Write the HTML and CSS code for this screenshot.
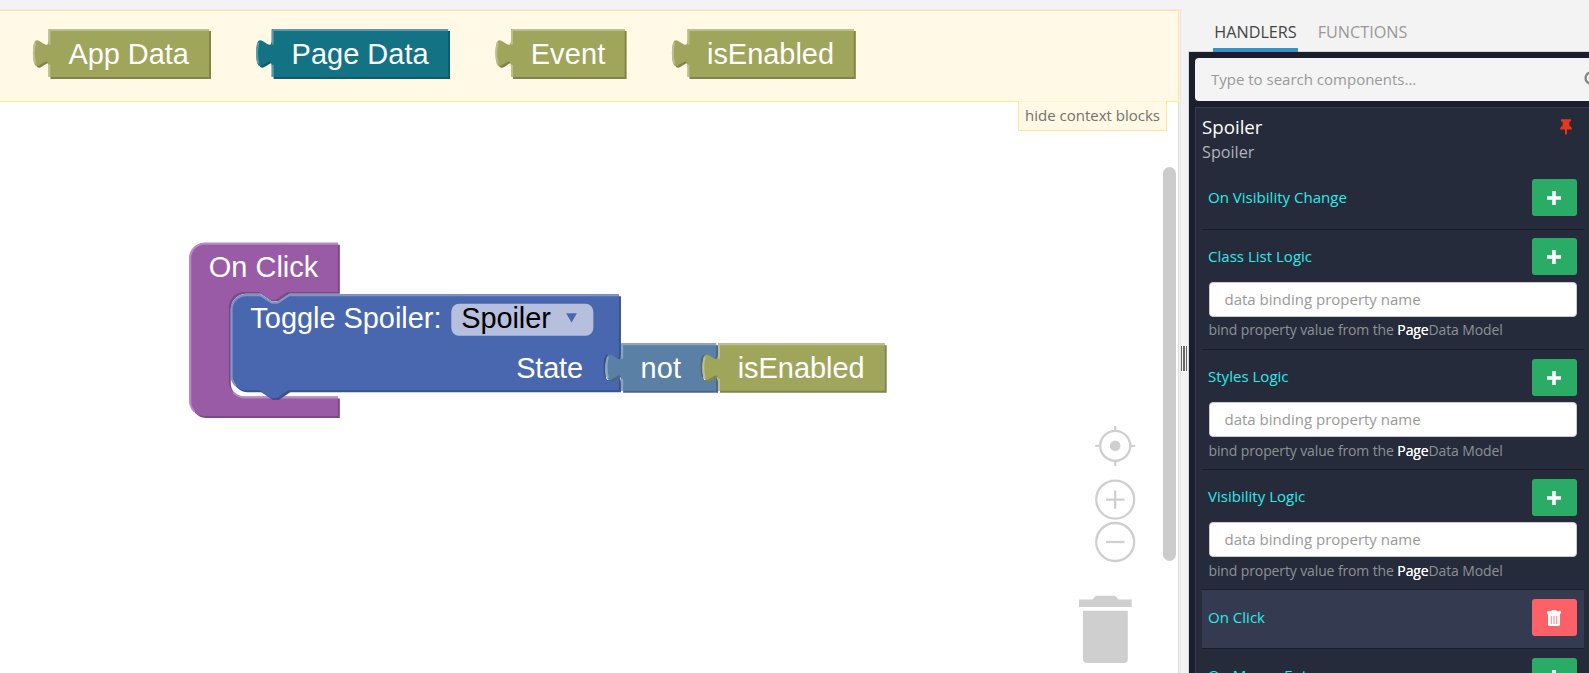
FILE: index.html
```html
<!DOCTYPE html>
<html lang="en">
<head>
<meta charset="utf-8">
<title>Logic editor</title>
<link rel="stylesheet" href="styles.css">
</head>
<body>
<div class="app">
  <main class="editor">
    <section class="context">
      <svg class="context-blocks" width="1178" height="90" viewBox="0 11 1178 90">
        <g class="block olive" transform="translate(48.5 29) scale(1.93)">
          <path class="dark" transform="translate(1 1)" d="M0,0H83.2V24.9H0V20c0,-10 -8,8 -8,-7.5s8,2.5 8,-7.5z"/>
          <path class="main" d="M0,0H83.2V24.9H0V20c0,-10 -8,8 -8,-7.5s8,2.5 8,-7.5z"/>
          <path class="light" d="M.5,.5H83.2M.5,24.9V18.5m-7.36,-.5q-1.52,-5.5 0,-11m7.36,1V.5"/>
          <text x="10.3" y="18.2" textLength="62.4">App Data</text>
        </g>
        <g class="block teal" transform="translate(271.7 29) scale(1.93)">
          <path class="dark" transform="translate(1 1)" d="M0,0H91.4V24.9H0V20c0,-10 -8,8 -8,-7.5s8,2.5 8,-7.5z"/>
          <path class="main" d="M0,0H91.4V24.9H0V20c0,-10 -8,8 -8,-7.5s8,2.5 8,-7.5z"/>
          <path class="light" d="M.5,.5H91.4M.5,24.9V18.5m-7.36,-.5q-1.52,-5.5 0,-11m7.36,1V.5"/>
          <text x="10.3" y="18.2" textLength="71">Page Data</text>
        </g>
        <g class="block olive" transform="translate(511 29) scale(1.93)">
          <path class="dark" transform="translate(1 1)" d="M0,0H58.9V24.9H0V20c0,-10 -8,8 -8,-7.5s8,2.5 8,-7.5z"/>
          <path class="main" d="M0,0H58.9V24.9H0V20c0,-10 -8,8 -8,-7.5s8,2.5 8,-7.5z"/>
          <path class="light" d="M.5,.5H58.9M.5,24.9V18.5m-7.36,-.5q-1.52,-5.5 0,-11m7.36,1V.5"/>
          <text x="10.2" y="18.2" textLength="38.6">Event</text>
        </g>
        <g class="block olive" transform="translate(687.5 29) scale(1.93)">
          <path class="dark" transform="translate(1 1)" d="M0,0H86.2V24.9H0V20c0,-10 -8,8 -8,-7.5s8,2.5 8,-7.5z"/>
          <path class="main" d="M0,0H86.2V24.9H0V20c0,-10 -8,8 -8,-7.5s8,2.5 8,-7.5z"/>
          <path class="light" d="M.5,.5H86.2M.5,24.9V18.5m-7.36,-.5q-1.52,-5.5 0,-11m7.36,1V.5"/>
          <text x="10.1" y="18.2" textLength="65.8">isEnabled</text>
        </g>
      </svg>
    </section>
    <section class="workspace">
      <svg class="workspace-blocks" width="1178" height="571" viewBox="0 102 1178 571">
        <g class="block purple" transform="translate(189.3 242.7) scale(1.93)">
          <path class="dark" transform="translate(1 1)" d="M0,8A8,8 0 0 1 8,0H77V25.5H50.9l-6,4h-3l-6,-4h-7.4a8,8 0 0 0 -8,8V71.7a8,8 0 0 0 8,8H77V89.8H8a8,8 0 0 1 -8,-8z"/>
          <path class="main" d="M0,8A8,8 0 0 1 8,0H77V25.5H50.9l-6,4h-3l-6,-4h-7.4a8,8 0 0 0 -8,8V71.7a8,8 0 0 0 8,8H77V89.8H8a8,8 0 0 1 -8,-8z"/>
          <path class="light" d="M2.7,87.5A7.5,7.5 0 0 1 .5,81.8V8A7.5,7.5 0 0 1 8,.5H77M22.8,77.4a8.5,8.5 0 0 0 5.7,2.8H77"/>
          <text x="10.1" y="17.8" textLength="56.7">On Click</text>
        </g>
        <g class="block blue" transform="translate(230.7 294.2) scale(1.93)">
          <path class="dark" transform="translate(1 1)" d="M0,8A8,8 0 0 1 8,0H15.3l6,4h3l6,-4H201.2V30.4c0,10 -8,-8 -8,7.5s8,-2.5 8,7.5V49.8H29.9l-6,4h-3l-6,-4H8a8,8 0 0 1 -8,-8z"/>
          <path class="main" d="M0,8A8,8 0 0 1 8,0H15.3l6,4h3l6,-4H201.2V30.4c0,10 -8,-8 -8,7.5s8,-2.5 8,7.5V49.8H29.9l-6,4h-3l-6,-4H8a8,8 0 0 1 -8,-8z"/>
          <path class="light" d="M2.7,47.5A7.5,7.5 0 0 1 .5,41.8V8A7.5,7.5 0 0 1 8,.5H15.3l6,4h3l6,-4H201.2"/>
          <text x="10.2" y="17.4" textLength="99">Toggle Spoiler:</text>
          <rect class="field" x="114.3" y="5" width="73.6" height="16.5" rx="4"/>
          <text class="field-text" x="119.4" y="17.4" textLength="46.5">Spoiler</text>
          <path class="main" d="M173.8,9.9h5.6l-2.8,4.7z"/>
          <text x="147.9" y="43.4" textLength="34.7">State</text>
        </g>
        <g class="block steel" transform="translate(621.2 343.2) scale(1.93)">
          <path class="dark" transform="translate(1 1)" d="M0,0H49.2V5c0,10 -8,-8 -8,7.5s8,-2.5 8,7.5V24.7H0V20c0,-10 -8,8 -8,-7.5s8,2.5 8,-7.5z"/>
          <path class="main" d="M0,0H49.2V5c0,10 -8,-8 -8,7.5s8,-2.5 8,7.5V24.7H0V20c0,-10 -8,8 -8,-7.5s8,2.5 8,-7.5z"/>
          <path class="light" d="M.5,.5H49.2M.5,24.7V18.5m-7.36,-.5q-1.52,-5.5 0,-11m7.36,1V.5"/>
          <text x="10" y="17.8" textLength="21">not</text>
        </g>
        <g class="block olive" transform="translate(718 343.2) scale(1.93)">
          <path class="dark" transform="translate(1 1)" d="M0,0H86.4V24.7H0V20c0,-10 -8,8 -8,-7.5s8,2.5 8,-7.5z"/>
          <path class="main" d="M0,0H86.4V24.7H0V20c0,-10 -8,8 -8,-7.5s8,2.5 8,-7.5z"/>
          <path class="light" d="M.5,.5H86.4M.5,24.7V18.5m-7.36,-.5q-1.52,-5.5 0,-11m7.36,1V.5"/>
          <text x="10.2" y="17.8" textLength="65.8">isEnabled</text>
        </g>
        <g class="control">
          <circle cx="1115.2" cy="445.8" r="15"/>
          <path d="M1115.2,426v5M1115.2,461v5M1095.2,445.8h5M1130.2,445.8h5"/>
          <circle class="solid" cx="1115.2" cy="445.8" r="5.3"/>
          <circle cx="1115.2" cy="499.6" r="19"/>
          <path d="M1106,499.6h18.4M1115.2,490.4v18.4"/>
          <circle cx="1115.2" cy="542" r="19"/>
          <path d="M1106,542h18.4"/>
          <path class="solid" d="M1079,599.6h13.5l3.5,-3.8h19l3.5,3.8h13.2v7.4h-52.7zM1083,610.7h44.8v48.3a4,4 0 0 1 -4,4h-36.8a4,4 0 0 1 -4,-4z"/>
        </g>
        <rect class="scroll-thumb" x="1163" y="167" width="13" height="394" rx="6.5"/>
      </svg>
      <button class="hide-context">hide context blocks</button>
    </section>
  </main>
  <div class="splitter"><svg class="grip" width="6" height="25" viewBox="0 0 6 25"><path d="M0,0h1v25h-1zM2,0h2v25h-2zM5,0h1v25h-1z"/></svg></div>
  <aside class="panel">
    <nav class="tabs"><a class="tab active">HANDLERS</a><a class="tab">FUNCTIONS</a></nav>
    <div class="panel-body">
      <div class="search">
        <span>Type to search components...</span>
        <svg class="search-icon" width="18" height="18" viewBox="0 0 18 18"><circle cx="7" cy="7" r="5.5"/><path d="M11,11l5,5"/></svg>
      </div>
      <div class="card">
        <header class="card-head">
          <div>
            <h2 class="card-title">Spoiler</h2>
            <p class="card-type">Spoiler</p>
          </div>
          <svg class="pin" width="12" height="16" viewBox="0 0 12 16"><path d="M1,0.3H11V2.6H9.4V6.6C10.9,7.3 11.9,8.9 11.9,10.6H7V14.6L6.3,15.8H5.7L5,14.6V10.6H.1C.1,8.9 1.1,7.3 2.6,6.6V2.6H1z"/></svg>
        </header>
        <div class="row first">
          <div class="row-head"><span>On Visibility Change</span><button class="btn add"><svg width="14" height="14" viewBox="0 0 14 14"><path d="M5.2,0h3.6v5.2H14v3.6H8.8V14h-3.6V8.8H0v-3.6h5.2z"/></svg></button></div>
        </div>
        <div class="row tall second">
          <div class="row-head"><span>Class List Logic</span><button class="btn add"><svg width="14" height="14" viewBox="0 0 14 14"><path d="M5.2,0h3.6v5.2H14v3.6H8.8V14h-3.6V8.8H0v-3.6h5.2z"/></svg></button></div>
          <div class="input">data binding property name</div>
          <p class="help">bind property value from the <b>Page</b>Data Model</p>
        </div>
        <div class="row tall">
          <div class="row-head"><span>Styles Logic</span><button class="btn add"><svg width="14" height="14" viewBox="0 0 14 14"><path d="M5.2,0h3.6v5.2H14v3.6H8.8V14h-3.6V8.8H0v-3.6h5.2z"/></svg></button></div>
          <div class="input">data binding property name</div>
          <p class="help">bind property value from the <b>Page</b>Data Model</p>
        </div>
        <div class="row tall">
          <div class="row-head"><span>Visibility Logic</span><button class="btn add"><svg width="14" height="14" viewBox="0 0 14 14"><path d="M5.2,0h3.6v5.2H14v3.6H8.8V14h-3.6V8.8H0v-3.6h5.2z"/></svg></button></div>
          <div class="input">data binding property name</div>
          <p class="help">bind property value from the <b>Page</b>Data Model</p>
        </div>
        <div class="row selected">
          <div class="row-head"><span>On Click</span><button class="btn remove"><svg width="14" height="16" viewBox="0 0 14 16"><path fill-rule="evenodd" d="M0,1.2H4L5,0H9L10,1.2H14V3.6H0zM1,3.6H13V14.5Q13,16 11.5,16H2.5Q1,16 1,14.5zM3.8,6V14H4.6V6zM6.6,6V14H7.4V6zM9.4,6V14H10.2V6z"/></svg></button></div>
        </div>
        <div class="row">
          <div class="row-head"><span>On Mouse Enter</span><button class="btn add"><svg width="14" height="14" viewBox="0 0 14 14"><path d="M5.2,0h3.6v5.2H14v3.6H8.8V14h-3.6V8.8H0v-3.6h5.2z"/></svg></button></div>
        </div>
      </div>
    </div>
  </aside>
</div>
</body>
</html>
```
FILE: styles.css
```css
* { box-sizing: border-box; margin: 0; padding: 0; }
body { font-family: "Open Sans", sans-serif; background: #f3f3f3; overflow: hidden; }
button { font: inherit; border: 0; }
svg { display: block; }

.app { display: flex; width: 1589px; height: 673px; overflow: hidden; }

.editor { width: 1181px; margin-top: 9px; border-top: 1px solid #e9e9ee; border-right: 1px solid #e4e4e4; padding-right: 1px; flex: none; }
.context { height: 92px; width: 1179px; background: #fff9e6; border: solid #ffe69c; border-width: 1px 1px 1px 0; }
.workspace { height: 571px; width: 1179px; background: #fff; border-right: 1px solid #dedede; position: relative; }

.block text { font: 15px "Liberation Sans", Arial, sans-serif; fill: #fff; }
.block .field-text { fill: #000; }
.block .light { fill: none; stroke-width: 1; }
.field { fill: #b6c0de; }
.olive .main { fill: #a0a55c; }
.olive .dark { fill: #80844a; }
.olive .light { stroke: #bcc08d; }
.teal .main { fill: #147285; }
.teal .dark { fill: #105b6a; }
.teal .light { stroke: #5b9caa; }
.purple .main { fill: #995ba5; }
.purple .dark { fill: #7a4984; }
.purple .light { stroke: #b88cc0; }
.blue .main { fill: #4967af; }
.blue .dark { fill: #3a528c; }
.blue .light { stroke: #8095c7; }
.steel .main { fill: #5b80a5; }
.steel .dark { fill: #496684; }
.steel .light { stroke: #8ca6c0; }

.control circle, .control path { fill: none; stroke: #cfcfcf; stroke-width: 2.3; }
.control .solid { fill: #cfcfcf; stroke: none; }
.scroll-thumb { fill: #ccc; }

.hide-context { position: absolute; top: -1px; left: 1018px; width: 149px; height: 30px; padding-bottom: 2px; border: 1px solid #ffe5a0; border-top-color: #fff4d0; background: #fff9e6; color: #74726c; font-size: 15px; white-space: nowrap; }

.splitter { width: 7px; display: flex; align-items: center; padding-top: 43px; flex: none; }
.grip { fill: #666; }

.panel { flex: 1; min-width: 0; }
.tabs { height: 51px; padding-left: 25px; display: flex; gap: 19px; align-items: flex-end; }
.tab { height: 34px; width: 85px; line-height: 31px; font-size: 16.2px; text-align: center; color: #999; white-space: nowrap; }
.tab:last-child { width: 91px; }
.tab.active { color: #444; line-height: 29px; border-bottom: 4px solid #3d8fc9; position: relative; top: 1px; }
.panel-body { height: 622px; border: solid #d5d5dc; border-width: 1px 0 0 1px; background: #1b1e2b; padding: 6px 0 0 6px; overflow: hidden; }
.search { height: 43px; width: 410px; padding: 0 16px 2px; border-radius: 4px; background: #f4f4f4; color: #999; font-size: 15px; display: flex; align-items: center; position: relative; }
.search-icon { position: absolute; left: 389px; top: 13px; }
.search-icon circle, .search-icon path { fill: none; stroke: #888; stroke-width: 2.4; }

.card { margin-top: 6px; height: 580px; border: solid #363c50; border-width: 1px 0 0 1px; background: #252b3b; padding: 0 5px 0 6px; }
.card-head { height: 62px; display: flex; justify-content: space-between; padding: 6px 12px 0 0; }
.card-title { font-size: 18.7px; font-weight: 400; line-height: 26px; color: #fff; }
.card-type { font-size: 16.2px; line-height: 24px; color: #b0b3b8; }
.pin { margin-top: 5px; fill: #e8381b; }

.row { height: 59px; padding: 9px 7px 0 6px; border-bottom: 1px solid #1a1e2b; }
.row.first { height: 60px; }
.row.tall { height: 120px; }
.row.second { padding-top: 8px; }
.row.selected { background: #343b51; }
.row-head { display: flex; justify-content: space-between; height: 37px; line-height: 35px; font-size: 15.05px; color: #2deaea; }
.first .row-head, .second .row-head, .selected .row-head { line-height: 37px; }
.btn { width: 45px; height: 37px; border-radius: 3px; padding-right: 1px; display: flex; align-items: center; justify-content: center; }
.btn path { fill: #fff; }
.add { background: #2bac66; }
.remove { background: #fc6168; }
.input { margin: 6px 0 0 1px; height: 35px; border: 1px solid #ccc; border-radius: 4px; background: #fff; color: #999; font-size: 15px; line-height: 33px; padding-left: 14.5px; }
.second .input { margin-top: 7px; }
.help { margin: 4px 0 0 0.5px; font-size: 14px; letter-spacing: -0.12px; line-height: 20px; color: #8e9196; white-space: nowrap; }
.second .help { margin-top: 3px; }
.help b { font-weight: 400; color: #fff; text-shadow: 0 0 0.5px #fff; }
```
